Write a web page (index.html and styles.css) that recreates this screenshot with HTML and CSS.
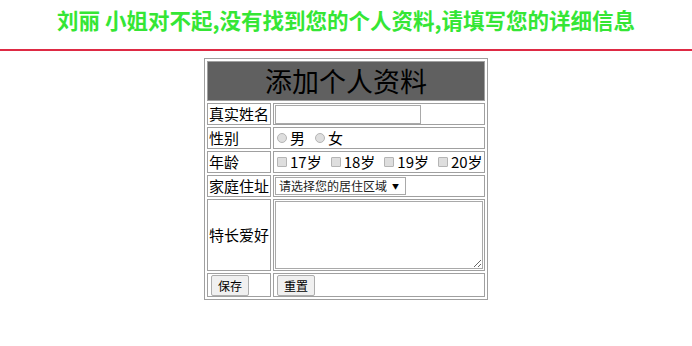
FILE: index.html
```html
<!DOCTYPE html>
<html lang="zh-CN">
<head>
<meta charset="utf-8">
<title>添加个人资料</title>
<link rel="stylesheet" href="styles.css">
</head>
<body>
<div class="banner">刘丽 小姐对不起,没有找到您的个人资料,请填写您的详细信息</div>
<form class="form">
<table class="profile">
  <tr><td class="head" colspan="2"><div class="cell cell-head">添加个人资料</div></td></tr>
  <tr>
    <td class="label"><div class="cell">真实姓名</div></td>
    <td class="field"><div class="cell"><input class="text" type="text"></div></td>
  </tr>
  <tr>
    <td class="label"><div class="cell">性别</div></td>
    <td class="field"><div class="cell">
      <label class="opt opt-wide"><input class="radio" type="radio" name="sex">男</label>
      <label class="opt opt-wide"><input class="radio" type="radio" name="sex">女</label>
    </div></td>
  </tr>
  <tr>
    <td class="label"><div class="cell">年龄</div></td>
    <td class="field"><div class="cell">
      <label class="opt"><input class="check" type="checkbox">17岁</label>
      <label class="opt"><input class="check" type="checkbox">18岁</label>
      <label class="opt"><input class="check" type="checkbox">19岁</label>
      <label class="opt"><input class="check" type="checkbox">20岁</label>
    </div></td>
  </tr>
  <tr>
    <td class="label"><div class="cell">家庭住址</div></td>
    <td class="field"><div class="cell">
      <span class="select-wrap"><select class="select"><option>请选择您的居住区域</option></select></span>
    </div></td>
  </tr>
  <tr>
    <td class="label"><div class="cell cell-tall">特长爱好</div></td>
    <td class="field"><div class="cell cell-tall"><textarea class="area"></textarea></div></td>
  </tr>
  <tr>
    <td class="label"><div class="cell cell-btn"><button class="btn" type="button">保存</button></div></td>
    <td class="field"><div class="cell cell-btn"><button class="btn" type="reset">重置</button></div></td>
  </tr>
</table>
</form>
</body>
</html>
```
FILE: styles.css
```css
html, body {
  margin: 0;
  padding: 0;
  background: #ffffff;
}

body {
  font-family: "Noto Sans CJK SC", "Noto Sans", sans-serif;
  color: #000;
}

.banner {
  text-align: center;
  color: #35e635;
  font-weight: bold;
  font-size: 21.5px;
  line-height: 28px;
  padding: 6px 0 15px;
  border-bottom: 2px solid #de2a44;
}

.form {
  margin: 7px 0 0;
}

.profile {
  margin: 0 auto;
  border: 1px solid #a0a0a0;
  border-collapse: separate;
  border-spacing: 2px;
}

.profile td {
  border: 1px solid #a0a0a0;
  padding: 1px;
  font-size: 15px;
  line-height: 18px;
  vertical-align: middle;
  white-space: nowrap;
}

.cell {
  display: flex;
  align-items: center;
  height: 18px;
}

.cell-head {
  justify-content: center;
  height: 36px;
  font-size: 27px;
  line-height: 36px;
}

.cell-tall {
  height: 68px;
}

.cell-btn {
  height: 20px;
}

.profile td.head {
  background: #606060;
  color: #000;
}

.profile td.label .cell {
  width: 60px;
}

.profile td.field .cell {
  width: 208px;
}

.text {
  box-sizing: border-box;
  width: 146px;
  height: 19px;
  margin: 0;
  padding: 1px 2px;
  border: 1px solid #a9a9a9;
  font: inherit;
}

.opt {
  display: inline-flex;
  align-items: center;
  margin-right: 7px;
}

.opt-wide {
  margin-right: 8px;
}

.opt:last-child {
  margin-right: 0;
}

.radio, .check {
  appearance: none;
  -webkit-appearance: none;
  box-sizing: border-box;
  width: 10px;
  height: 10px;
  margin: 0 3px 0 2px;
  border: 1px solid #b5b5b5;
  background: #dedede;
}

.radio {
  border-radius: 50%;
}

.check {
  border-radius: 1px;
}

.select-wrap {
  position: relative;
  display: inline-block;
}

.select-wrap::after {
  content: "▼";
  position: absolute;
  right: 7px;
  top: 4px;
  font-size: 7px;
  line-height: 10px;
  color: #000;
  pointer-events: none;
}

.select {
  display: block;
  appearance: none;
  -webkit-appearance: none;
  box-sizing: border-box;
  width: 131px;
  height: 18px;
  margin: 0;
  padding: 0 0 0 3px;
  border: 1px solid #a9a9a9;
  border-radius: 0;
  background: #fff;
  font-family: inherit;
  font-size: 12px;
  line-height: 16px;
  color: #222;
}

.area {
  display: block;
  box-sizing: border-box;
  width: 208px;
  height: 68px;
  margin: 0;
  padding: 2px;
  border: 1px solid #a9a9a9;
  font: inherit;
  resize: both;
}

.btn {
  box-sizing: border-box;
  height: 21px;
  margin: 0 0 0 2px;
  padding: 0 6px;
  border: 1px solid #adadad;
  border-radius: 2px;
  background: #f0f0f0;
  font-family: inherit;
  font-size: 12px;
  line-height: 17px;
  color: #000;
}
```
